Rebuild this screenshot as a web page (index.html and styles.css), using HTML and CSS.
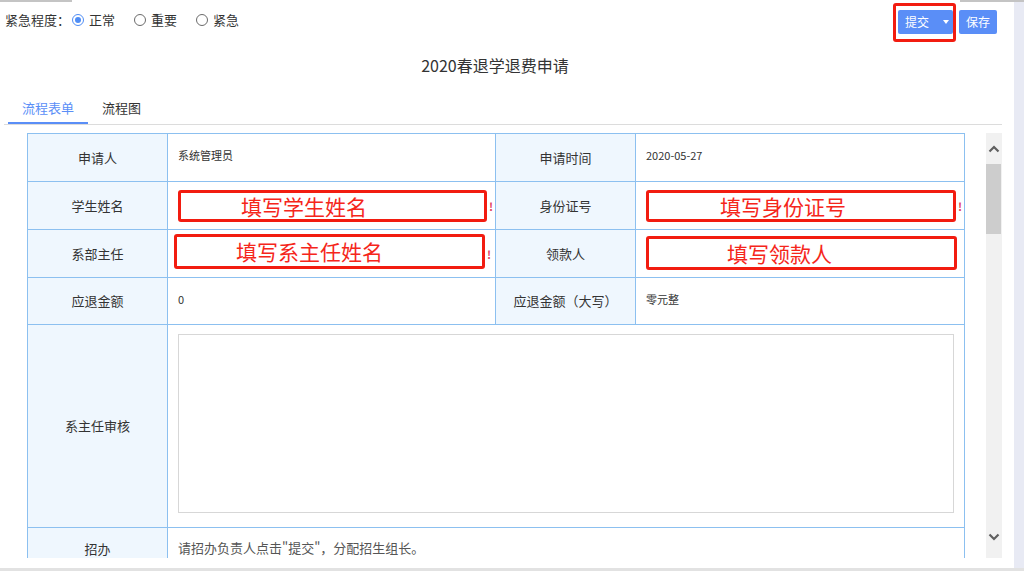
FILE: index.html
```
<!DOCTYPE html>
<html lang="zh-CN">
<head>
<meta charset="utf-8">
<title>2020春退学退费申请</title>
<link rel="stylesheet" href="styles.css">
</head>
<body>
<div class="screen">
  <div class="topline"><span class="tl-a"></span><span class="tl-gap"></span><span class="tl-b"></span></div>
  <div class="row">
    <div class="main">
      <div class="header">
        <div class="urgency">
          <span class="u-label">紧急程度：</span>
          <span class="radio checked"><i></i></span><span class="r-text">正常</span>
          <span class="radio"><i></i></span><span class="r-text">重要</span>
          <span class="radio"><i></i></span><span class="r-text">紧急</span>
        </div>
        <div class="actions">
          <div class="mark">
            <button class="btn split">提交<span class="caret"></span></button>
          </div>
          <button class="btn save">保存</button>
        </div>
      </div>
      <h1 class="title">2020春退学退费申请</h1>
      <div class="tabs">
        <div class="tab active">流程表单</div>
        <div class="tab">流程图</div>
      </div>
      <div class="body">
        <div class="form-area">
          <table class="form">
            <colgroup><col class="c1"><col class="c2"><col class="c3"><col class="c4"></colgroup>
            <tr class="r48">
              <td class="lab">申请人</td>
              <td class="val">系统管理员</td>
              <td class="lab">申请时间</td>
              <td class="val">2020-05-27</td>
            </tr>
            <tr class="r48">
              <td class="lab">学生姓名</td>
              <td class="inp"><div class="line"><div class="box b1">填写学生姓名</div><span class="req">!</span></div></td>
              <td class="lab">身份证号</td>
              <td class="inp"><div class="line"><div class="box b2">填写身份证号</div><span class="req">!</span></div></td>
            </tr>
            <tr class="r48">
              <td class="lab">系部主任</td>
              <td class="inp"><div class="line"><div class="box b3">填写系主任姓名</div><span class="req">!</span></div></td>
              <td class="lab">领款人</td>
              <td class="inp"><div class="line"><div class="box b4">填写领款人</div></div></td>
            </tr>
            <tr class="r47">
              <td class="lab">应退金额</td>
              <td class="val">0</td>
              <td class="lab">应退金额（大写）</td>
              <td class="val">零元整</td>
            </tr>
            <tr class="r203">
              <td class="lab">系主任审核</td>
              <td class="area" colspan="3"><div class="textarea"></div></td>
            </tr>
            <tr class="r42">
              <td class="lab">招办</td>
              <td class="note" colspan="3">请招办负责人点击"提交"，分配招生组长。</td>
            </tr>
          </table>
        </div>
        <div class="scrollbar">
          <div class="sb-btn"><svg width="12" height="8" viewBox="0 0 12 8"><path d="M1.5 6.5 L6 2 L10.5 6.5" fill="none" stroke="#606060" stroke-width="2.2"/></svg></div>
          <div class="sb-thumb"></div>
          <div class="sb-fill"></div>
          <div class="sb-btn down"><svg width="12" height="8" viewBox="0 0 12 8"><path d="M1.5 1.5 L6 6 L10.5 1.5" fill="none" stroke="#606060" stroke-width="2.2"/></svg></div>
        </div>
      </div>
    </div>
    <div class="side"></div>
  </div>
  <div class="bottom"></div>
</div>
</body>
</html>
```
FILE: styles.css
```
* { box-sizing: border-box; }
html, body { margin: 0; padding: 0; background: #fff; }
body {
  font-family: "Noto Sans CJK SC", "Microsoft YaHei", sans-serif;
  color: #333;
  font-size: 13px;
}
.screen { width: 1024px; height: 571px; display: flex; flex-direction: column; overflow: hidden; }
.topline { height: 2px; display: flex; flex: none; }
.tl-a { width: 72px; background: #c4c4c4; }
.tl-gap { flex: 1; }
.tl-b { width: 64px; background: #c4c4c4; }
.row { flex: 1; display: flex; min-height: 0; }
.main { width: 1014px; display: flex; flex-direction: column; background: #fff; }
.side { flex: 1; background: #e8eaf4; }
.bottom { height: 3px; background: #e2e2e2; flex: none; }

.header { height: 40px; display: flex; justify-content: space-between; align-items: flex-start; padding: 1px 17px 0 5px; }
.urgency { margin-top: 7px; display: flex; align-items: center; line-height: 20px; font-size: 13px; color: #333; }
.u-label { margin-right: 2px; }
.radio { width: 12px; height: 12px; border: 1px solid #6b6b6b; border-radius: 50%; display: inline-flex; align-items: center; justify-content: center; margin-right: 5px; }
.radio.checked { border-color: #4f8df5; }
.radio.checked i { width: 6px; height: 6px; border-radius: 50%; background: #4f8df5; }
.r-text { margin-right: 19px; }
.actions { display: flex; align-items: flex-start; }
.mark { border: 3px solid #f21c10; border-radius: 3px; padding: 4px 0 5px 2px; width: 63px; height: 39px; }
.btn { font-family: inherit; border: none; background: #5a8ef7; color: #fff; font-size: 12px; height: 24px; border-radius: 2px; padding: 0; line-height: 24px; display: flex; align-items: center; }
.split { width: 55px; padding-left: 7px; }
.caret { width: 0; height: 0; border-left: 3px solid transparent; border-right: 3px solid transparent; border-top: 4px solid #fff; margin-left: 14px; }
.save { width: 38px; justify-content: center; margin: 7px 0 0 3px; }

.title { margin: 13px 0 0; padding-right: 24px; font-size: 16px; font-weight: normal; line-height: 20px; text-align: center; color: #333; }

.tabs { margin: 23px 12px 0 4px; padding-left: 4px; display: flex; border-bottom: 1px solid #dcdcdc; }
.tab { padding: 0 14px 4px; line-height: 20px; font-size: 13px; color: #333; border-bottom: 2px solid transparent; }
.tab.active { color: #5a8ef7; border-bottom-color: #5a8ef7; }

.body { margin-top: 8px; height: 425px; display: flex; padding-left: 27px; }
.form-area { width: 940px; height: 425px; overflow: hidden; flex: none; }
.form { width: 937px; border-collapse: collapse; table-layout: fixed; }
.c1 { width: 140px; } .c2 { width: 328px; } .c3 { width: 140px; } .c4 { width: 329px; }
.form td { border: 1px solid #8cc0f0; padding: 0; }
.r48 { height: 48px; } .r47 { height: 47px; } .r203 { height: 203px; } .r42 { height: 42px; }
.lab { background: #eff7fe; text-align: center; vertical-align: middle; font-size: 13px; color: #333; line-height: 20px; }
.val { vertical-align: top; padding: 13px 10px 0 !important; font-size: 11px; line-height: 16px; color: #333; }
.inp { vertical-align: middle; padding: 0 0 0 10px !important; }
.line { display: flex; align-items: center; }
.box { border: 3px solid #f21c10; border-radius: 3px; color: #f5261b; font-size: 21px; line-height: 26px; display: flex; align-items: center; white-space: nowrap; }
.b1 { width: 309px; height: 32px; padding-left: 60px; }
.b2 { width: 310px; height: 32px; padding-left: 71px; }
.b3 { width: 311px; height: 35px; margin-left: -4px; margin-top: -5px; padding-left: 59px; }
.b4 { width: 311px; height: 34px; margin-top: -1px; padding-left: 78px; }
.req { color: #e23a5c; font-size: 11px; font-weight: bold; margin-left: 2px; line-height: 12px; }
.area { vertical-align: top; padding: 9px 10px 14px !important; }
.textarea { height: 179px; width: 776px; border: 1px solid #d7d7d7; }
.note { vertical-align: top; padding: 10px 10px 0 !important; font-size: 13px; line-height: 20px; color: #555; }

.scrollbar { margin-left: 19px; width: 16px; height: 425px; background: #f1f1f1; display: flex; flex-direction: column; flex: none; }
.sb-btn { height: 31px; display: flex; align-items: center; justify-content: center; }
.sb-btn.down { height: 28px; align-items: flex-start; padding-top: 3px; }
.sb-thumb { height: 70px; width: 15px; background: #cdcdcd; }
.sb-fill { flex: 1; }
```
